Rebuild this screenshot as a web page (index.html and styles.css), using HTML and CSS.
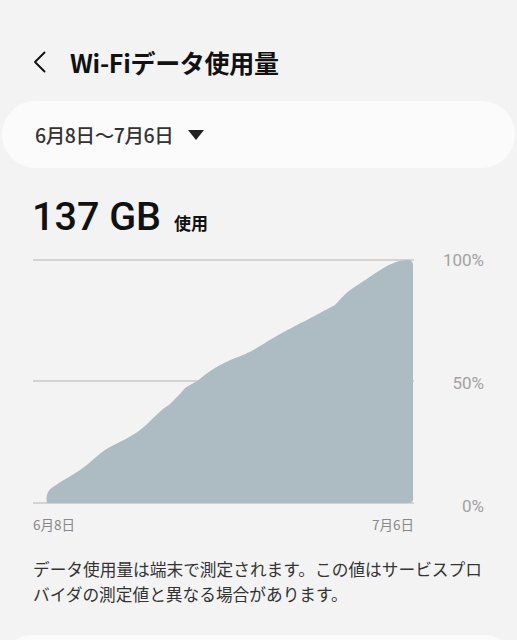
FILE: index.html
```html
<!DOCTYPE html>
<html lang="ja">
<head>
<meta charset="utf-8">
<link rel="stylesheet" href="styles.css">
</head>
<body>
<header class="header">
  <svg class="back" width="14" height="22" viewBox="0 0 14 22"><path d="M11.5 1.5 L2 11 L11.5 20.5" fill="none" stroke="#111" stroke-width="1.9" stroke-linecap="round" stroke-linejoin="round"/></svg>
  <h1 class="title">Wi-Fiデータ使用量</h1>
</header>
<div class="range-card">
  <span class="range">6月8日〜7月6日</span>
  <svg class="caret" width="16" height="11" viewBox="0 0 16 11"><path d="M0 0 H16 L8 10 Z" fill="#222"/></svg>
</div>
<div class="usage"><span class="amount">137 GB</span><span class="used">使用</span></div>
<div class="chart">
  <div class="plot">
    <svg width="381" height="246" viewBox="0 0 381 246">
      <line x1="0" y1="1" x2="381" y2="1" stroke="#c8c8c8" stroke-width="1.5"/>
      <line x1="0" y1="122" x2="381" y2="122" stroke="#c8c8c8" stroke-width="1.5"/>
      <line x1="0" y1="244" x2="381" y2="244" stroke="#c8c8c8" stroke-width="1.5"/>
      <path d="M14 244 C13 240 13 232 20 228 C30 221 40 216 50 209 C58 203 62 198 72 191 C85 183 100 178 112 167 C120 160 126 152 136 146 C142 140 148 134 152 129 C160 124 165 122 168 119 C176 112 186 106 202 99 C210 96 215 94 222 90 C235 82 250 73 262 67 C275 61 290 52 302 46 C308 40 312 34 320 29 C334 20 345 12 354 7 C362 3 368 1 375 1 C378 1 380 3 380 6 V240 C380 243 378 244 375 244 Z" fill="#adbbc3"/>
    </svg>
    <div class="xlabels"><span>6月8日</span><span>7月6日</span></div>
  </div>
  <div class="ylabels"><span>100%</span><span>50%</span><span>0%</span></div>
</div>
<p class="note">データ使用量は端末で測定されます。この値はサービスプロバイダの測定値と異なる場合があります。</p>
<div class="bottom-card"></div>
</body>
</html>
```
FILE: styles.css
```css
html, body {
  margin: 0;
  padding: 0;
  background: #f3f3f3;
  font-family: Roboto, "Noto Sans CJK JP", sans-serif;
  color: #111;
  overflow: hidden;
  height: 640px;
}
.header {
  display: flex;
  align-items: center;
  height: 101px;
  padding-left: 33px;
  box-sizing: border-box;
  padding-top: 23px;
}
.back {
  display: block;
  margin-right: 23px;
}
.title {
  margin: 0;
  font-size: 25px;
  font-weight: 700;
  font-family: "Noto Sans CJK JP", sans-serif;
  letter-spacing: -0.3px;
}
.range-card {
  margin: 0 2px;
  height: 67px;
  border-radius: 34px;
  background: #fbfbfb;
  display: flex;
  align-items: center;
  padding-left: 33px;
}
.range {
  font-family: "Noto Sans CJK JP", sans-serif;
  font-size: 19.5px;
  font-weight: 500;
  color: #333;
  letter-spacing: -0.4px;
}
.caret {
  margin-left: 15px;
  margin-top: 2px;
}
.usage {
  display: flex;
  align-items: baseline;
  padding-left: 32px;
  margin-top: 25px;
  height: 57px;
}
.amount {
  font-family: Roboto, sans-serif;
  font-size: 39.5px;
  font-weight: 500;
  color: #111;
}
.used {
  font-family: "Noto Sans CJK JP", sans-serif;
  font-size: 17px;
  font-weight: 700;
  margin-left: 13px;
}
.chart {
  display: flex;
  padding-left: 33px;
  margin-top: 9px;
}
.plot svg {
  display: block;
}
.xlabels {
  display: flex;
  justify-content: space-between;
  width: 381px;
  font-family: "Noto Sans CJK JP", sans-serif;
  font-size: 13.5px;
  color: #888;
  margin-top: 9px;
}
.ylabels {
  display: flex;
  flex-direction: column;
  justify-content: space-between;
  align-items: flex-end;
  width: 70px;
  height: 266px;
  margin-top: -9px;
  font-family: Roboto, sans-serif;
  font-size: 17px;
  font-weight: 400;
  color: #a2a2a2;
}
.note {
  margin: 23px 30px 0 33px;
  font-family: "Noto Sans CJK JP", sans-serif;
  font-size: 16.7px;
  line-height: 25px;
  color: #333;
}
.bottom-card {
  margin: 28px 2px 0;
  height: 60px;
  border-radius: 34px;
  background: #fbfbfb;
}
```
